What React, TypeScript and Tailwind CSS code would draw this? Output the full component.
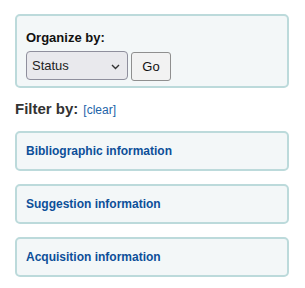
import React from "react";

const font = { fontFamily: '"Liberation Sans", Arial, sans-serif' };

function Section({ title }: { title: string }) {
  return (
    <div className="h-[40px] border-2 border-[#bcdadb] rounded-[5px] bg-[#f3f7f8] flex items-center pl-[9px]">
      <span className="text-[12px] leading-[15px] font-bold text-[#0d4f99]">{title}</span>
    </div>
  );
}

export default function App() {
  return (
    <div className="w-[305px] h-[288px] bg-white pt-[14px] pl-[15px] pr-[16px]" style={font}>
      <div className="h-[74px] border-2 border-[#bcdadb] rounded-[5px] bg-[#f3f7f8] px-[9px] pt-[14px]">
        <div className="text-[13px] leading-[16px] font-bold text-[#111]">Organize by:</div>
        <div className="flex items-start gap-[3px] mt-[5px]">
          <div className="relative w-[102px] h-[29px] border border-[#8f8f9d] rounded-[4px] bg-[#e9e9ed] flex items-center pl-[5px]">
            <span className="text-[13px] text-[#222]">Status</span>
            <svg className="absolute right-[7px] top-[12px]" width="9" height="6" viewBox="0 0 9 6">
              <path d="M1 1 L4.5 4.5 L8 1" fill="none" stroke="#333" strokeWidth="1.4" />
            </svg>
          </div>
          <div className="mt-[1px] w-[40px] h-[29px] border border-[#8f8f8f] rounded-[3px] bg-[#f2f2f2] flex items-center justify-center">
            <span className="text-[13px] text-[#111]">Go</span>
          </div>
        </div>
      </div>
      <div className="mt-[12px] h-[18px] flex items-baseline">
        <span className="text-[15px] leading-[18px] font-bold text-[#333]">Filter by:</span>
        <span className="ml-[5px] text-[12px] text-[#2163a8]">[clear]</span>
      </div>
      <div className="mt-[13px] flex flex-col gap-[13px]">
        <Section title="Bibliographic information" />
        <Section title="Suggestion information" />
        <Section title="Acquisition information" />
      </div>
    </div>
  );
}
